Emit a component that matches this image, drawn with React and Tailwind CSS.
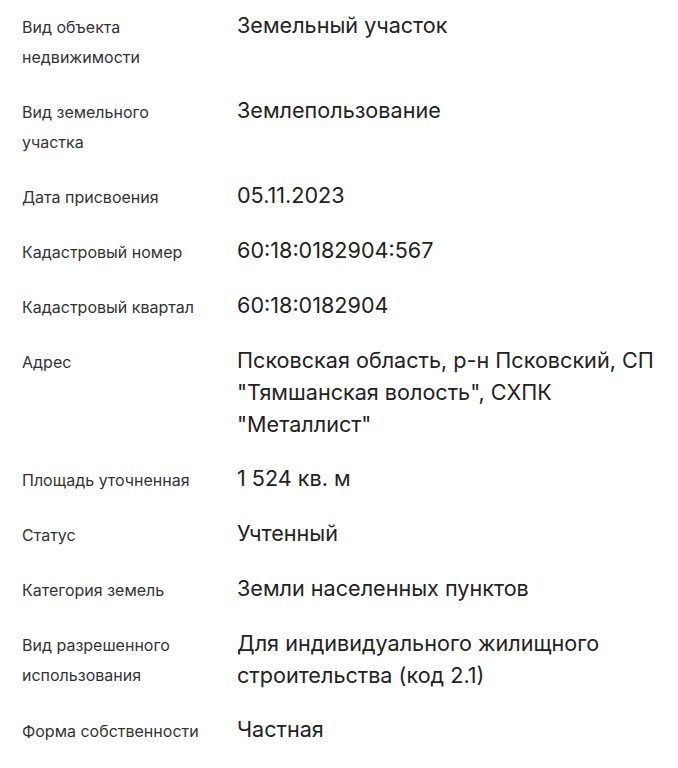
const rows = [
  { label: ["Вид объекта", "недвижимости"], value: ["Земельный участок"] },
  { label: ["Вид земельного", "участка"], value: ["Землепользование"] },
  { label: ["Дата присвоения"], value: ["05.11.2023"] },
  { label: ["Кадастровый номер"], value: ["60:18:0182904:567"] },
  { label: ["Кадастровый квартал"], value: ["60:18:0182904"] },
  {
    label: ["Адрес"],
    value: [
      "Псковская область, р-н Псковский, СП",
      "\"Тямшанская волость\", СХПК",
      "\"Металлист\"",
    ],
  },
  { label: ["Площадь уточненная"], value: ["1 524 кв. м"] },
  { label: ["Статус"], value: ["Учтенный"] },
  { label: ["Категория земель"], value: ["Земли населенных пунктов"] },
  {
    label: ["Вид разрешенного", "использования"],
    value: ["Для индивидуального жилищного", "строительства (код 2.1)"],
  },
  { label: ["Форма собственности"], value: ["Частная"] },
];

export default function App() {
  return (
    <div
      className="min-h-screen w-[678px] bg-white pl-[22px] pt-[9px]"
      style={{ fontFamily: "Inter, 'Noto Sans', sans-serif" }}
    >
      <div className="flex flex-col gap-[22px]">
        {rows.map((row, i) => (
          <div key={i} className="flex items-start">
            <div className="w-[215px] shrink-0 pt-[3px] text-[16px] leading-[30px] text-[#333333]">
              {row.label.map((l, j) => (
                <div key={j} className="whitespace-nowrap">{l}</div>
              ))}
            </div>
            <div className="text-[21.6px] leading-[32px] text-[#222222]">
              {row.value.map((v, j) => (
                <div key={j} className="whitespace-nowrap">{v}</div>
              ))}
            </div>
          </div>
        ))}
      </div>
    </div>
  );
}
